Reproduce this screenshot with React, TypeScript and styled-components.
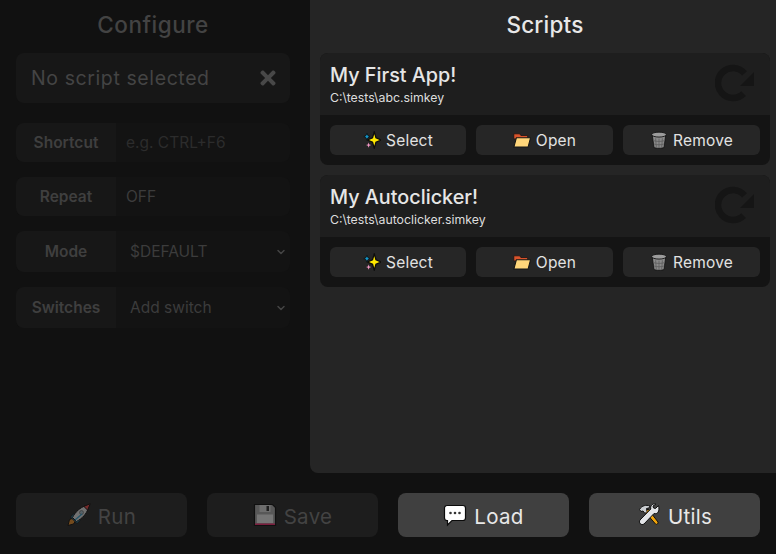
import styled, { createGlobalStyle } from 'styled-components';
import { ChevronDown } from 'lucide-react';
import { FaTimes } from 'react-icons/fa';

const GlobalStyle = createGlobalStyle`
  html, body {
    margin: 0;
    padding: 0;
    background: #111111;
    overflow: hidden;
  }
  * {
    box-sizing: border-box;
  }
`;

const Page = styled.div`
  width: 776px;
  height: 554px;
  display: grid;
  grid-template-columns: 310px 466px;
  grid-template-rows: 473px 81px;
  font-family: Inter, 'Noto Sans', 'Liberation Sans', sans-serif;
  background: #111111;
  color: #e8e8e8;
`;

const ConfigPane = styled.section`
  padding: 0 20px 0 16px;
  display: flex;
  flex-direction: column;
`;

const ScriptsPane = styled.section`
  background: #252525;
  border-bottom-left-radius: 8px;
  padding: 0 6px 0 10px;
`;

const Title = styled.h1<{ $dim?: boolean }>`
  margin: 0;
  height: 53px;
  display: flex;
  align-items: center;
  justify-content: center;
  font-size: 22.5px;
  font-weight: 500;
  letter-spacing: ${(p) => (p.$dim ? '0.5px' : '0.2px')};
  padding-bottom: 4px;
  color: ${(p) => (p.$dim ? '#434343' : '#e8e8e8')};
`;

const ScriptBanner = styled.div`
  height: 50px;
  border-radius: 8px;
  background: #171717;
  display: flex;
  align-items: center;
  justify-content: space-between;
  padding: 0 11px 0 15px;
  margin-bottom: 20px;
  font-size: 19.5px;
  letter-spacing: 0.6px;
  color: #444444;
  svg {
    width: 22px;
    height: 22px;
    color: #484848;
  }
`;

const Row = styled.div<{ $height: number; $gap: number }>`
  height: ${(p) => p.$height}px;
  margin-bottom: ${(p) => p.$gap}px;
  display: flex;
  border-radius: 8px;
  background: #131313;
  overflow: hidden;
`;

const RowLabel = styled.div`
  width: 100px;
  display: flex;
  align-items: center;
  justify-content: center;
  background: #171717;
  font-size: 15.5px;
  font-weight: 600;
  color: #3f3f3f;
`;

const RowValue = styled.div<{ $faint?: boolean; $inset: number }>`
  flex: 1;
  display: flex;
  align-items: center;
  justify-content: space-between;
  padding: 0 3px 0 ${(p) => p.$inset}px;
  font-size: 15.5px;
  color: ${(p) => (p.$faint ? '#2c2c2c' : '#3c3c3c')};
  svg {
    width: 12px;
    height: 12px;
    stroke-width: 3;
    color: #444444;
  }
`;

const CardList = styled.div`
  display: flex;
  flex-direction: column;
  gap: 10px;
`;

const Card = styled.article`
  width: 450px;
  height: 112px;
  border-radius: 8px;
  overflow: hidden;
  background: #141414;
`;

const CardHead = styled.div`
  height: 62px;
  background: #1e1e1e;
  padding: 10px 10px 0;
  position: relative;
  svg {
    position: absolute;
    right: 15px;
    top: 10px;
    width: 40px;
    height: 40px;
  }
`;

const CardName = styled.div`
  font-size: 19.8px;
  font-weight: 500;
  line-height: 25px;
  color: #e6e6e6;
`;

const CardPath = styled.div`
  font-size: 12.3px;
  line-height: 17px;
  margin-top: 1px;
  color: #dddddd;
`;

const CardActions = styled.div`
  height: 50px;
  display: grid;
  grid-template-columns: 136px 137px 137px;
  gap: 10px;
  padding: 10px;
`;

const SmallButton = styled.button`
  height: 30px;
  border: 0;
  border-radius: 6px;
  background: #262626;
  color: #e2e2e2;
  font: inherit;
  font-size: 15.5px;
  letter-spacing: 0.2px;
  display: flex;
  align-items: center;
  justify-content: center;
  gap: 5px;
  padding: 0;
  svg {
    width: 18px;
    height: 18px;
    flex-shrink: 0;
  }
`;

const Footer = styled.footer`
  grid-column: 1 / 3;
  display: grid;
  grid-template-columns: repeat(4, 171px);
  gap: 20px;
  padding: 20px 16px 17px;
`;

const BigButton = styled.button<{ $off?: boolean }>`
  border: 0;
  border-radius: 8px;
  background: ${(p) => (p.$off ? '#1d1d1d' : '#404040')};
  color: ${(p) => (p.$off ? '#434343' : '#e8e8e8')};
  font: inherit;
  font-size: 20.5px;
  letter-spacing: 0.3px;
  display: flex;
  align-items: center;
  justify-content: center;
  gap: 7px;
  padding: 2px 0 0;
  svg {
    width: 24px;
    height: 24px;
    flex-shrink: 0;
    margin-top: -2px;
    opacity: ${(p) => (p.$off ? 0.42 : 1)};
  }
`;

const RedoIcon = () => (
  <svg viewBox="0 0 40 40">
    <path d="M29.500 10.400A15 15 0 1 0 28.600 30.600" fill="none" stroke="#151515" strokeWidth="6.500" />
    <path d="M39 9v14H25z" fill="#151515" />
  </svg>
);

const SparkleIcon = () => (
  <svg viewBox="0 0 16 16">
    <path d="M10 .8l1.500 5.200L16 8l-4.500 2-1.500 5.200L8.500 10 4 8l4.500-2z" fill="#ffe900" stroke="#0c0c0c" strokeWidth="1.100" />
    <path d="M3.500 2l.9 2.100 1.800.9-1.800.9-.9 2.100-.9-2.100L.8 5l1.800-.9z" fill="#1597c9" stroke="#0c0c0c" strokeWidth=".7" />
    <path d="M5 10.200l.6 1.700 1.700.6-1.700.6L5 14.800l-.6-1.700-1.700-.6 1.700-.6z" fill="#f59ac6" />
  </svg>
);

const FolderIcon = () => (
  <svg viewBox="0 0 16 16">
    <path d="M.7 2.500h5.300l1 1.500h6v3H.7z" fill="#d9532b" stroke="#141414" strokeWidth=".7" />
    <path d="M3 6h12.600l-2.200 8.300H.8z" fill="#ffd67a" stroke="#141414" strokeWidth=".9" />
  </svg>
);

const TrashIcon = () => (
  <svg viewBox="0 0 16 16">
    <path d="M2 3.500l1.500 11c1.200 1.200 7.800 1.200 9 0L14 3.500z" fill="#8a8a8a" stroke="#141414" strokeWidth=".8" />
    <ellipse cx="8" cy="3.200" rx="6.500" ry="2.200" fill="#9c9c9c" stroke="#141414" strokeWidth=".8" />
    <path d="M5 6.500l.6 8M8 6.800V15M11 6.500l-.6 8M2.800 8.500c3 1 7.400 1 10.400 0M3.300 11.500c3 1 6.400 1 9.400 0" stroke="#5c5c5c" strokeWidth=".7" fill="none" />
  </svg>
);

const RocketIcon = () => (
  <svg viewBox="0 0 24 24">
    <path d="M6.500 15L2.500 16.500 1 22.500l5.500-1.500 2-3z" fill="#e98a1e" stroke="#000" strokeWidth="1" />
    <path d="M7 10.500L3.500 14l6.500 6.500 3.500-3.500z" fill="#2a9fd0" stroke="#000" strokeWidth="1" />
    <path d="M5.500 14.500C8.500 8.500 13.500 4.500 18 3l3 3c-1.500 4.500-5.500 9.500-11.500 12.500z" fill="#e6e6e6" stroke="#000" strokeWidth="1" />
    <path d="M16.500 3.500l6.800-2.800-2.800 6.800c-.8-1.600-2.400-3.200-4-4z" fill="#ee3d3d" stroke="#000" strokeWidth="1" />
    <circle cx="14.500" cy="9.500" r="2" fill="#a8c0cc" stroke="#555" strokeWidth=".6" />
    <path d="M8 17l7-6" stroke="#2a9fd0" strokeWidth="1.200" />
  </svg>
);

const FloppyIcon = () => (
  <svg viewBox="0 0 24 24">
    <path d="M1.500 1.500h18l3 3v18h-21z" fill="#aaaaaa" stroke="#000" strokeWidth="1.200" />
    <path d="M6.500 2h11v7h-11z" fill="#dddddd" />
    <path d="M13.500 3h2.500v5h-2.500z" fill="#222" />
    <path d="M4 11.500h16v8.500H4z" fill="#f2f2f2" />
    <path d="M2 20.500h20v1.500H2z" fill="#ff1f6a" />
  </svg>
);

const BubbleIcon = () => (
  <svg viewBox="0 0 24 24">
    <path d="M4 2.500h16a2.500 2.500 0 0 1 2.500 2.500v10a2.500 2.500 0 0 1-2.500 2.500H9L4.500 22v-4.500H4A2.500 2.500 0 0 1 1.500 15V5A2.500 2.500 0 0 1 4 2.500z" fill="#fff" stroke="#0b0b0b" strokeWidth="1.200" />
    <circle cx="7.500" cy="10" r="1.300" fill="#333" />
    <circle cx="12" cy="10" r="1.300" fill="#333" />
    <circle cx="16.500" cy="10" r="1.300" fill="#333" />
  </svg>
);

const ToolsIcon = () => (
  <svg viewBox="0 0 24 24">
    <path d="M8 9l3-3 10 13c.8 1.200-1.200 3-2.300 2.200z" fill="#f0a30a" stroke="#111" strokeWidth="1" />
    <path d="M2.500 6.500C5 2.500 9 1.500 13 3l-1 2-2.500.5.500 3-2 2-2-2.500-2 .5z" fill="#c9ccd0" stroke="#111" strokeWidth="1" />
    <path d="M21.500 2.500l-3 3-2-.5-.5-2 3-2c-3-.8-6 1.500-5.200 5L3 17c-2 2.500 1.500 6 4 4l10-10.500c3.500 1 6-2 4.500-8z" fill="#e3e5e8" stroke="#111" strokeWidth="1" />
  </svg>
);

const SCRIPTS = [
  { name: 'My First App!', path: 'C:\\tests\\abc.simkey' },
  { name: 'My Autoclicker!', path: 'C:\\tests\\autoclicker.simkey' },
];

export default function App() {
  return (
    <Page>
      <GlobalStyle />
      <ConfigPane>
        <Title $dim>Configure</Title>
        <ScriptBanner>
          No script selected
          <FaTimes />
        </ScriptBanner>
        <Row $height={39} $gap={15}>
          <RowLabel>Shortcut</RowLabel>
          <RowValue $faint $inset={10}>e.g. CTRL+F6</RowValue>
        </Row>
        <Row $height={39} $gap={15}>
          <RowLabel>Repeat</RowLabel>
          <RowValue $inset={10}>OFF</RowValue>
        </Row>
        <Row $height={41} $gap={15}>
          <RowLabel>Mode</RowLabel>
          <RowValue $inset={14}>
            $DEFAULT
            <ChevronDown />
          </RowValue>
        </Row>
        <Row $height={41} $gap={0}>
          <RowLabel>Switches</RowLabel>
          <RowValue $inset={14}>
            Add switch
            <ChevronDown />
          </RowValue>
        </Row>
      </ConfigPane>
      <ScriptsPane>
        <Title>Scripts</Title>
        <CardList>
          {SCRIPTS.map((script) => (
            <Card key={script.name}>
              <CardHead>
                <CardName>{script.name}</CardName>
                <CardPath>{script.path}</CardPath>
                <RedoIcon />
              </CardHead>
              <CardActions>
                <SmallButton><SparkleIcon />Select</SmallButton>
                <SmallButton><FolderIcon />Open</SmallButton>
                <SmallButton><TrashIcon />Remove</SmallButton>
              </CardActions>
            </Card>
          ))}
        </CardList>
      </ScriptsPane>
      <Footer>
        <BigButton $off><RocketIcon />Run</BigButton>
        <BigButton $off><FloppyIcon />Save</BigButton>
        <BigButton><BubbleIcon />Load</BigButton>
        <BigButton><ToolsIcon />Utils</BigButton>
      </Footer>
    </Page>
  );
}
